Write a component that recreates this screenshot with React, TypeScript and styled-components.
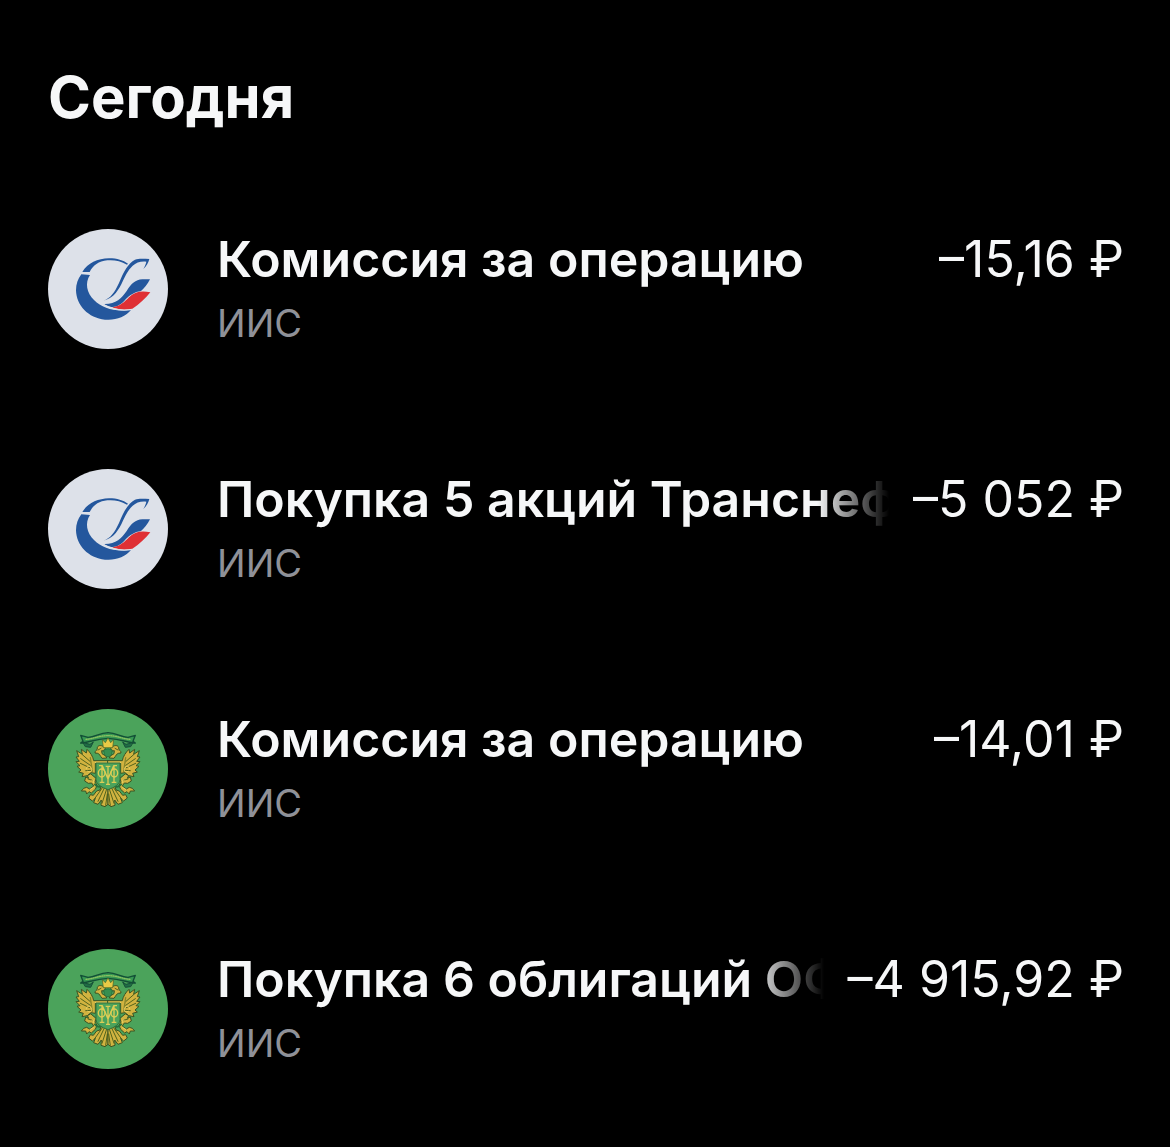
import React from "react";
import styled, { createGlobalStyle } from "styled-components";

const GlobalStyle = createGlobalStyle`
  body {
    margin: 0;
    background: #000;
    color: #f6f7f8;
    font-family: Inter, "Liberation Sans", sans-serif;
  }
`;

const Page = styled.main`
  padding: 60px 46px 78px 48px;
`;

const Heading = styled.h1`
  margin: 0 0 95px;
  font-size: 58px;
  line-height: 74px;
  font-weight: 700;
`;

const List = styled.ul`
  display: flex;
  flex-direction: column;
  gap: 120px;
  margin: 0;
  padding: 0;
  list-style: none;
`;

const Row = styled.li`
  display: flex;
  gap: 49px;
  height: 120px;
`;

const Badge = styled.svg`
  flex: none;
  width: 120px;
  height: 120px;
`;

const Details = styled.div`
  flex: 1;
  min-width: 0;
`;

const TopLine = styled.div`
  display: flex;
  gap: 24px;
  font-size: 50px;
  line-height: 60px;
  white-space: nowrap;
`;

const Title = styled.h2<{ $faded: boolean }>`
  flex: 1;
  min-width: 0;
  margin: 0;
  overflow: hidden;
  font-size: inherit;
  font-weight: 600;
  mask-image: ${({ $faded }) =>
    $faded ? "linear-gradient(to left, transparent, #000 72px)" : "none"};
`;

const Amount = styled.span`
  flex: none;
  font-weight: 400;
`;

const Account = styled.p`
  margin: 10px 0 0;
  color: #8f9198;
  font-size: 38px;
  line-height: 48px;
`;

function TransneftLogo() {
  return (
    <Badge viewBox="24 27 360 360" role="img" aria-label="Транснефть">
      <circle cx="204" cy="207" r="180" fill="#dde1e9" />
      <g fill="#24579d">
        <path d="M127 156C143 129 173 116 207 115C232 115 249 121 264 131L261 134C242 123 222 119 202 121C176 124 159 136 149 156Z" />
        <path d="M124 163L150 165C134 188 140 219 162 240C189 267 232 278 275 268C255 292 226 302 195 299C145 294 109 257 108 211C108 192 114 176 124 163Z" />
        <path d="M190 242C211 236 224 217 237 189C250 157 265 128 285 119C297 115 313 117 328 117C325 128 320 138 310 147C315 138 318 131 319 125C302 123 289 128 278 137C263 151 254 171 244 193C230 220 215 237 190 242Z" />
        <path d="M192 252C227 253 245 235 260 213C274 191 286 179 307 178L330 178C323 193 312 205 303 213C283 216 270 225 257 238C244 253 230 263 214 261C205 260 198 256 192 252Z" />
      </g>
      <path d="M216 262C240 260 254 245 267 232C283 216 302 211 331 217C317 234 298 254 276 267C257 271 234 270 216 262Z" fill="#df3035" />
      <path d="M190 254C213 267 247 273 277 268" fill="none" stroke="#dde1e9" strokeWidth="4" />
    </Badge>
  );
}

function EmblemHalf() {
  return (
    <g strokeLinejoin="round" strokeLinecap="round">
      <path d="M204 98C177 99 166 112 144 112L122 106L129 124L122 129C145 129 161 117 204 115" fill="#379852" stroke="#124f36" strokeWidth="4" />
      <path d="M138 118C161 117 173 107 204 107" fill="none" stroke="#8dc060" strokeWidth="4" strokeDasharray="3 4" />
      <path d="M130 128L150 133L160 126L152 142L137 140Z" fill="#1f6d45" stroke="#164f36" strokeWidth="3" />
      <g fill="#d2b340" stroke="#3c5423" strokeWidth="3">
        <path d="M204 182L161 182C159 170 151 157 141 148L139 159L124 148L127 163L110 152L116 170L108 171L118 184L108 185L120 197L111 199L123 210L116 216L130 220L126 230L142 227L153 218L166 220L166 190L204 190Z" />
        <path d="M199 174L186 175C181 168 177 160 173 160L165 159C165 151 171 151 172 147C170 139 178 134 187 138L196 145L192 153L185 152L186 161L197 168Z" />
        <path d="M151 222L142 227L146 235L137 231L134 243L145 250L155 249L161 258L149 267L140 262L131 265L124 273L137 273L140 282L147 275L154 279L166 268L171 256L165 246L168 236Z" />
        <path d="M184 256L180 270L170 273L160 286L151 284L146 294L157 303L166 295L161 308L174 313L184 300L183 316L195 320L204 313L204 259Z" />
      </g>
      <g fill="none" stroke="#52641c" strokeWidth="3">
        <path d="M126 163L151 185M122 176L151 196M121 190L149 203M137 212L153 211M144 237L158 241M174 150L183 145" />
        <path d="M188 262L164 296M194 262L174 304M201 264L186 310M202 282L197 316" />
      </g>
      <path d="M151 173L157 214" fill="none" stroke="#8b872b" strokeWidth="4" />
      <path d="M139 207C139 198 148 196 153 203C160 212 149 219 143 214M154 243C160 236 163 240 160 248M151 268L160 263M166 187H202" fill="none" stroke="#ecd164" strokeWidth="3" />
      <path d="M164 253C172 265 186 261 193 253" fill="none" stroke="#26713c" strokeWidth="5" />
    </g>
  );
}

function TreasuryLogo() {
  return (
    <Badge viewBox="24 27 360 360" role="img" aria-label="Министерство финансов">
      <circle cx="204" cy="207" r="180" fill="#4ba35b" />
      <EmblemHalf />
      <g transform="translate(408 0) scale(-1 1)">
        <EmblemHalf />
      </g>
      <path d="M190 143L187 119L196 128L204 114L212 128L221 119L218 143Z" fill="#e8ca46" stroke="#485f22" strokeWidth="2" />
      <path d="M191 150Q204 143 217 150L214 165Q204 175 194 165Z" fill="#368f50" stroke="#236a3a" strokeWidth="2" />
      <path d="M168 189H240V238Q240 257 204 269Q168 257 168 238Z" fill="#4ba35b" stroke="#35713a" strokeWidth="3" />
      <g fill="none" stroke="#dccd55" strokeWidth="4" strokeLinejoin="round">
        <path d="M177 197H187L204 237L221 197H231M186 197V246M222 197V246M197 199H211M204 199V253M179 247H193M215 247H229M198 253H210" />
        <ellipse cx="185" cy="219" rx="10" ry="12" />
        <ellipse cx="223" cy="219" rx="10" ry="12" />
      </g>
    </Badge>
  );
}

const operations = [
  { title: "Комиссия за операцию", amount: "–15,16 ₽", Logo: TransneftLogo, faded: false },
  { title: "Покупка 5 акций Транснефть", amount: "–5 052 ₽", Logo: TransneftLogo, faded: true },
  { title: "Комиссия за операцию", amount: "–14,01 ₽", Logo: TreasuryLogo, faded: false },
  { title: "Покупка 6 облигаций ОФЗ", amount: "–4 915,92 ₽", Logo: TreasuryLogo, faded: true },
];

export default function App() {
  return (
    <>
      <GlobalStyle />
      <Page>
        <Heading>Сегодня</Heading>
        <List>
          {operations.map(({ title, amount, Logo, faded }) => (
            <Row key={amount}>
              <Logo />
              <Details>
                <TopLine>
                  <Title $faded={faded}>{title}</Title>
                  <Amount>{amount}</Amount>
                </TopLine>
                <Account>ИИС</Account>
              </Details>
            </Row>
          ))}
        </List>
      </Page>
    </>
  );
}
